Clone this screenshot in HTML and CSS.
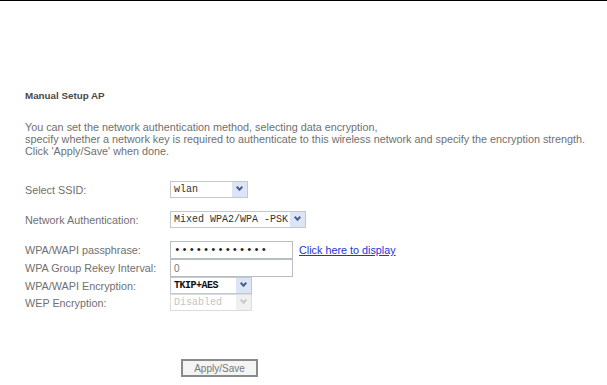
FILE: index.html
```html
<html>
<head>
<title>Wireless -- Security</title>
<link rel="stylesheet" href="styles.css">
</head>
<body>
<div id="topline"></div>

<div id="content">
  <div class="title">Manual Setup AP</div>

  <p class="intro">
    You can set the network authentication method, selecting data encryption,<br>
    specify whether a network key is required to authenticate to this wireless network and specify the encryption strength.<br>
    Click 'Apply/Save' when done.
  </p>

  <table class="form ssid">
    <tr>
      <td class="label">Select SSID:</td>
      <td>
        <span class="combo w78"><span class="value">wlan</span><span class="arrow"></span></span>
      </td>
    </tr>
  </table>

  <table class="form auth">
    <tr>
      <td class="label">Network Authentication:</td>
      <td>
        <span class="combo w135"><span class="value">Mixed WPA2/WPA -PSK</span><span class="arrow"></span></span>
      </td>
    </tr>
  </table>

  <table class="form keys">
    <tr>
      <td class="label">WPA/WAPI passphrase:</td>
      <td class="field">
        <input type="password" class="text secret" value="wlan123456789">
        <a href="#" class="show">Click here to display</a>
      </td>
    </tr>
    <tr>
      <td class="label">WPA Group Rekey Interval:</td>
      <td class="field"><input type="text" class="text plain" value="0"></td>
    </tr>
    <tr>
      <td class="label">WPA/WAPI Encryption:</td>
      <td class="field">
        <span class="combo w82 bold"><span class="value">TKIP+AES</span><span class="arrow"></span></span>
      </td>
    </tr>
    <tr>
      <td class="label">WEP Encryption:</td>
      <td class="field">
        <span class="combo w82 disabled"><span class="value">Disabled</span><span class="arrow"></span></span>
      </td>
    </tr>
  </table>

  <div id="footer">
    <button class="apply">Apply/Save</button>
  </div>
</div>
</body>
</html>
```

FILE: styles.css
```css
body {
  margin:0;
  font-family:"Liberation Sans", Arial, sans-serif;
  font-size:10.8px;
  color:#707070;
  background:#fff;
}

#topline {
  height:1px;
  background:#000;
}

#content {
  padding:89px 0 0 25px;
}

.title {
  font-weight:bold;
  font-size:9.8px;
  color:#4a4a4a;
  line-height:12px;
}

.intro {
  margin:19px 0 0 0;
  line-height:12px;
}

.form {
  border-collapse:collapse;
  font-size:10.8px;
}

.form td {
  padding:0;
  height:17px;
  line-height:12px;
  vertical-align:middle;
}

.form .label {
  width:145px;
  white-space:nowrap;
}

.ssid {
  margin-top:24px;
}

.auth {
  margin-top:13px;
}

.keys {
  margin-top:13px;
}

.field {
  white-space:nowrap;
}

.text {
  width:123px;
  height:18px;
  margin:0;
  padding:0 3px;
  border:1px solid #b9bec4;
  font-family:"Liberation Mono", monospace;
  font-size:10px;
  color:#333;
  box-sizing:border-box;
  vertical-align:middle;
}

.text.secret {
  font-size:11px;
  letter-spacing:0.6px;
  color:#222;
}

.text.plain {
  font-family:"Liberation Sans", Arial, sans-serif;
  color:#777;
}

.show {
  color:#2233dd;
  margin-left:3px;
  vertical-align:middle;
}

.combo {
  display:inline-flex;
  align-items:stretch;
  height:17px;
  border:1px solid #c3c8cc;
  box-sizing:border-box;
  background:#fff;
  font-family:"Liberation Mono", monospace;
  font-size:10px;
  color:#333;
  vertical-align:middle;
}

.combo .value {
  flex:1;
  padding:0 3px;
  line-height:15px;
  white-space:nowrap;
  overflow:hidden;
}

.combo .arrow {
  width:15px;
  background:#dbe5f5;
  position:relative;
}

.combo .arrow:after {
  content:"";
  position:absolute;
  left:5px;
  top:3px;
  width:3px;
  height:3px;
  border-right:2px solid #4a5f8c;
  border-bottom:2px solid #4a5f8c;
  transform:rotate(45deg);
}

.w78 { width:78px; }
.w135 { width:136px; }
.w82 { width:82px; }

.combo.bold {
  color:#111;
  font-weight:bold;
  letter-spacing:-0.5px;
}

.combo.disabled {
  color:#c4c4c4;
  border-color:#dcdcdc;
}

.combo.disabled .arrow {
  background:#f0f0f0;
}

.combo.disabled .arrow:after {
  border-color:#c8c8c8;
}

#footer {
  padding:48px 0 0 156px;
}

.apply {
  width:77px;
  height:18px;
  padding:0;
  border:2px solid #8a8a8a;
  background:#f2f4f6;
  font-family:"Liberation Sans", Arial, sans-serif;
  font-size:10px;
  color:#777;
}
```
